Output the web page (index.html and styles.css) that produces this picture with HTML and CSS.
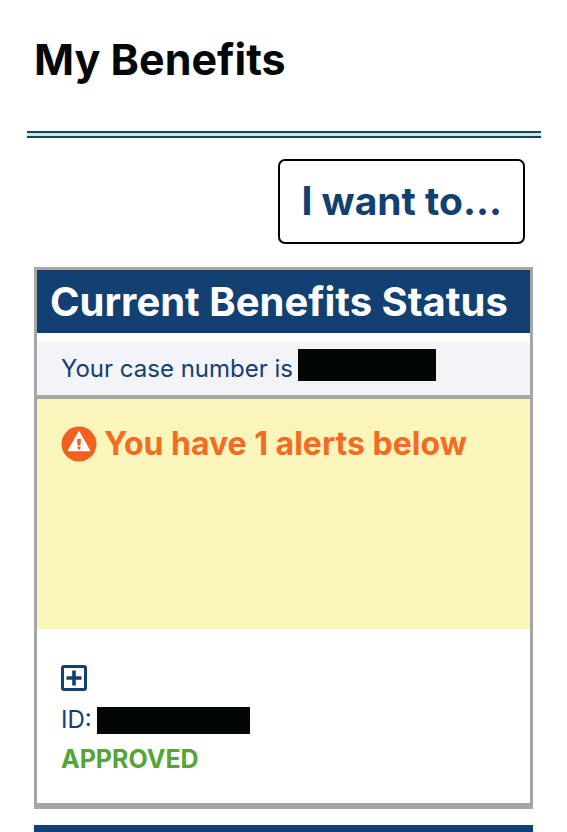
FILE: index.html
```html
<!DOCTYPE html>
<html lang="en">
<head>
<meta charset="utf-8">
<meta name="viewport" content="width=device-width, initial-scale=1">
<title>My Benefits</title>
<link rel="stylesheet" href="styles.css">
</head>
<body>
<header class="page-header">
  <h1 class="page-title">My Benefits</h1>
</header>
<div class="divider"></div>
<main class="content">
  <div class="actions">
    <button type="button" class="want-button">I want to...</button>
  </div>
  <section class="card">
    <h2 class="card-title">Current Benefits Status</h2>
    <p class="case-row">Your case number is <span class="redacted redacted-case"></span></p>
    <div class="alert-panel">
      <p class="alert">
        <svg class="alert-icon" viewBox="0 0 36 36" aria-hidden="true">
          <circle cx="18" cy="18" r="17.5" fill="#f1601f"/>
          <path d="M18 6 28.500 24.500H7.500Z" fill="#fff" stroke="#fff" stroke-width="1.5" stroke-linejoin="round"/>
          <path d="M16 13h4l-.5 6.500h-3z" fill="#f1601f"/>
          <circle cx="18" cy="21.800" r="1.600" fill="#f1601f"/>
        </svg>
        <span>You have 1 alerts below</span>
      </p>
    </div>
    <div class="member">
      <button type="button" class="expand-button" aria-label="Expand">
        <svg class="expand-icon" viewBox="0 0 26 26" aria-hidden="true">
          <rect x="1.5" y="1.5" width="23" height="23" rx="1.5" fill="none" stroke="#124072" stroke-width="3"/>
          <path d="M13 5.500v15M5.500 13h15" stroke="#124072" stroke-width="3.600"/>
        </svg>
      </button>
      <p class="member-id">ID: <span class="redacted redacted-id"></span></p>
      <p class="status">APPROVED</p>
    </div>
  </section>
  <section class="next-card"></section>
</main>
</body>
</html>
```
FILE: styles.css
```css
* {
  box-sizing: border-box;
}

body {
  margin: 0;
  background: #fff;
  color: #124072;
  font-family: Inter, "Liberation Sans", sans-serif;
}

h1,
h2,
p {
  margin: 0;
}

.page-header {
  padding: 32px 34px 44px;
}

.page-title {
  color: #050808;
  font-size: 43px;
  font-weight: 700;
  line-height: 55px;
}

.divider {
  height: 7px;
  margin: 0 26px 0 27px;
  border: solid #124465;
  border-width: 2px 0;
  background: #d3e9cc;
}

.content {
  padding: 21px 34px 0;
}

.actions {
  display: flex;
  justify-content: flex-end;
  padding-right: 8px;
}

.want-button {
  padding: 15px 21px 16px;
  border: 2px solid #000;
  border-radius: 7px;
  background: #fff;
  color: #124072;
  font-family: inherit;
  font-size: 39px;
  font-weight: 700;
  line-height: 50px;
}

.card {
  margin-top: 23px;
  border: 3px solid #a5a6a5;
  border-bottom-width: 6px;
}

.card-title {
  padding: 7px 13px 6px;
  background: #124072;
  color: #fff;
  font-size: 40px;
  font-weight: 700;
  line-height: 50px;
  white-space: nowrap;
}

.case-row {
  display: flex;
  align-items: flex-start;
  gap: 5px;
  margin-top: 9px;
  padding: 7px 24px 6px;
  border-bottom: 4px solid #a5a6a5;
  background: #f3f4f7;
  font-size: 24px;
  line-height: 40px;
}

.redacted {
  background: #020606;
}

.redacted-case {
  width: 138px;
  height: 32px;
}

.redacted-id {
  width: 153px;
  height: 27px;
}

.alert-panel {
  min-height: 230px;
  padding: 25px 24px;
  background: #f9f5bb;
}

.alert {
  display: flex;
  align-items: center;
  gap: 7px;
  color: #f36c21;
  font-size: 32px;
  font-weight: 700;
  line-height: 40px;
}

.alert-icon {
  width: 36px;
  height: 36px;
}

.member {
  padding: 36px 24px 28px;
}

.expand-button {
  display: block;
  padding: 0;
  border: 0;
  background: none;
}

.expand-icon {
  display: block;
  width: 26px;
  height: 26px;
}

.member-id {
  display: flex;
  align-items: center;
  gap: 5px;
  margin-top: 13px;
  font-size: 24px;
  line-height: 32px;
}

.status {
  margin-top: 7px;
  color: #55a437;
  font-size: 25px;
  font-weight: 700;
  line-height: 32px;
}

.next-card {
  height: 7px;
  margin-top: 16px;
  background: #124072;
}
```
